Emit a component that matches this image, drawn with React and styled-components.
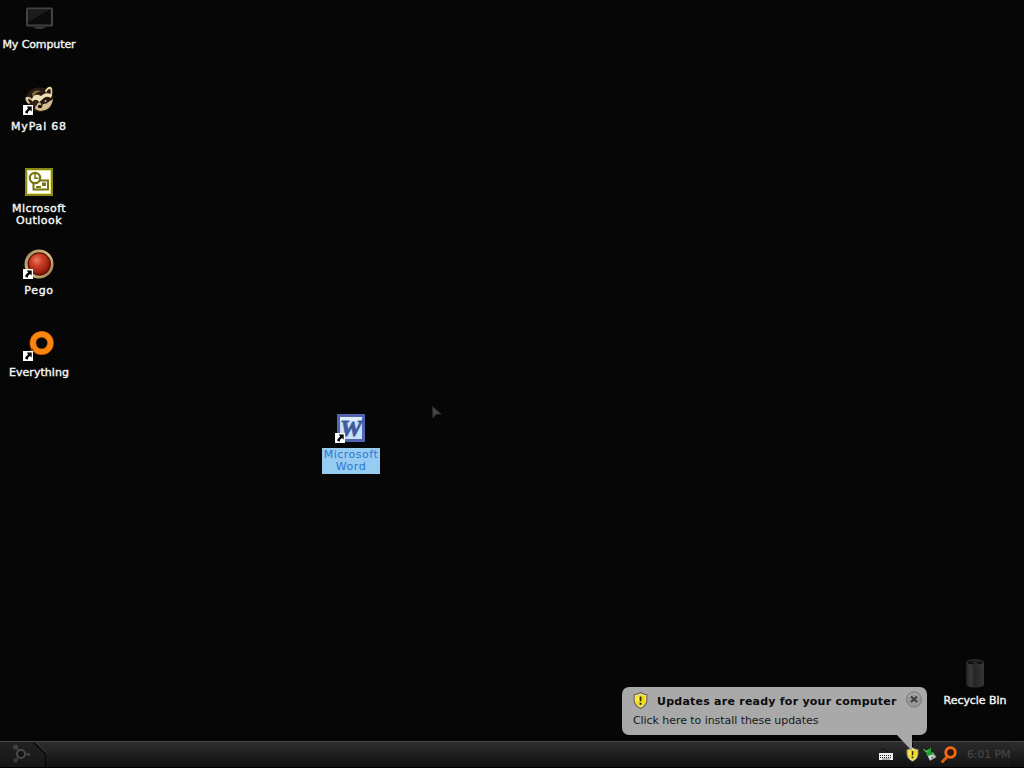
import React from "react"
import styled, { createGlobalStyle } from "styled-components"

const GlobalStyle = createGlobalStyle`
    body {
        margin: 0;
        background: #060606;
        overflow: hidden;
    }
`

const Screen = styled.div`
    position: relative;
    display: flex;
    flex-direction: column;
    width: 1024px;
    height: 768px;
    background: #060606;
    font-family: "DejaVu Sans", sans-serif;
    font-size: 11px;
    cursor: default;
    user-select: none;
`

const Desktop = styled.main`
    flex: 1;
`

const IconColumn = styled.div`
    display: flex;
    flex-direction: column;
    width: 78px;
`

const IconCell = styled.div`
    display: flex;
    flex-direction: column;
    align-items: center;
    box-sizing: border-box;
    width: 78px;
    height: 82px;
    padding-top: 2px;

    svg {
        display: block;
        flex: none;
    }
`

const FreeSpot = styled.div`
    position: absolute;
    left: ${(props) => props.$x}px;
    top: ${(props) => props.$y}px;
`

const Label = styled.div`
    margin-top: 4px;
    padding: 1px 2px;
    color: ${(props) => (props.$selected ? "#2a78d2" : "#f4f4f4")};
    background: ${(props) => (props.$selected ? "#97cbf1" : "transparent")};
    -webkit-text-stroke: ${(props) => (props.$selected ? "0" : "0.4px #f4f4f4")};
    letter-spacing: ${(props) => props.$spacing || 0}px;
    line-height: 12px;
    text-align: center;
    white-space: pre;
`

const Taskbar = styled.footer`
    display: flex;
    justify-content: space-between;
    box-sizing: border-box;
    height: 27px;
    border-top: 1px solid #484848;
    border-bottom: 1px solid #000;
    background: linear-gradient(#2d2d2d, #222 40%, #101010);
`

const StartButton = styled.div`
    width: 48px;
    height: 25px;

    svg {
        display: block;
    }
`

const Tray = styled.div`
    display: flex;
    align-items: center;
    height: 25px;
    padding-right: 14px;

    svg {
        display: block;
        flex: none;
    }
`

const TrayItems = styled.div`
    display: flex;
    align-items: center;
    gap: 2px;
    height: 25px;
    padding-left: 9px;
    border-left: 1px solid #090909;
    background: linear-gradient(#292929, #202020 50%, #141414);
`

const TraySlot = styled.div`
    display: flex;
    justify-content: center;
    width: ${(props) => props.$width}px;
`

const ShieldSlot = styled(TraySlot)`
    z-index: 1;
    margin-left: 10px;
    margin-right: -8px;
`

const Clock = styled.div`
    width: 43px;
    margin-left: 7px;
    color: #4a4a4a;
    letter-spacing: -0.15px;
    line-height: 25px;
    white-space: nowrap;
`

const Balloon = styled.section`
    position: absolute;
    z-index: 2;
    left: 622px;
    top: 687px;
    box-sizing: border-box;
    width: 305px;
    height: 48px;
    padding: 4px 4px 0 10px;
    border-radius: 7px;
    background: #a9a9a9;
    color: #181818;
`

const BalloonHead = styled.div`
    display: flex;
    align-items: flex-start;
    height: 20px;

    svg:first-child {
        margin-top: 1px;
    }
`

const BalloonTitle = styled.strong`
    flex: 1;
    margin-left: 8px;
    color: #0c0c0c;
    font-weight: bold;
    letter-spacing: 0.24px;
    line-height: 22px;
    white-space: nowrap;
`

const BalloonText = styled.div`
    margin: 2px 0 0 1px;
    letter-spacing: -0.06px;
    line-height: 16px;
    white-space: nowrap;
`

const BalloonTail = styled.svg`
    position: absolute;
    left: 274px;
    top: 47px;
`

function Shortcut() {
    return (
        <g>
            <rect x="0" y="21" width="10" height="10" fill="#fff" />
            <path d="M3.7 22.500h5v5L7 26C5.600 27 4.900 28 4.700 29.800L2 28.500c.3-1.600 1.500-2.700 3.200-4z" fill="#000" />
        </g>
    )
}

function ComputerIcon() {
    return (
        <svg width="32" height="32" viewBox="0 0 32 32">
            <rect x="4" y="6.500" width="25" height="17" rx="0.5" fill="#0b0b0b" stroke="#424242" strokeWidth="2" />
            <path d="M5 7.5h22L5 20z" fill="#1c1c1c" />
            <path d="M10 25h13c-2 1.200-3 2-6.500 2s-5-.8-6.500-2z" fill="#3c3c3c" />
        </svg>
    )
}

function RaccoonIcon() {
    return (
        <svg width="32" height="32" viewBox="0 0 32 32">
            <path d="M4 16C3 11 4 9 8 6c4-3 10-3 15-1l4-3 3 2v12c0 7-6 12-13 12C10 28 5 23 4 16z" fill="#281c10" />
            <path d="M22 7c1-3 4-5 6-4 2 2 1 7 1 9l-2-1c1-3 1-5 0-6-2 0-3 2-4 4z" fill="#e6d3a7" />
            <path d="M9 15c-2-2-5-3-6.500-1.500C2 16 4 19 6 20l1-1c-1-1-2-3-2-4 2 0 3 1 4 2z" fill="#dbc598" />
            <path d="M9 10c2-4 5-4 9-3l-5 2-3 4z" fill="#8a6c42" />
            <path d="M9 15c1-4 4-5 7-4l2 1c3-3 7-4 11-1l-1 3c-3-2-6-2-9 2l-3 2c-2-3-4-3-7 0z" fill="#efdfb8" />
            <path d="M22 17c3 1 6 0 8-2-1 6-4 10-8 11l-5 1-5-2 1-5 4-2 2 4z" fill="#d5bd91" />
            <path d="M18 17c3-3 7-3 9-1-1 3-5 4-7 4z" fill="#241a11" />
            <path d="M9 18c2-2 4-2 6 0l-1 3-4 2z" fill="#312317" />
            <ellipse cx="17" cy="22.500" rx="2.200" ry="1.800" fill="#181512" />
            <circle cx="22.500" cy="17" r="0.900" fill="#e9bc70" />
            <Shortcut />
        </svg>
    )
}

function OutlookIcon() {
    return (
        <svg width="32" height="32" viewBox="0 0 32 32">
            <rect x="3" y="3" width="26" height="26" fill="#fff" stroke="#8b8a16" strokeWidth="2" />
            <rect x="4.500" y="4.500" width="23" height="23" fill="none" stroke="#e8e68c" />
            <path d="M10.500 17v6.500h14.500V14.500H16" fill="#fff" stroke="#77760e" strokeWidth="2" />
            <circle cx="12" cy="12" r="5.200" fill="#fff" stroke="#77760e" strokeWidth="2.200" />
            <path d="M12 8v4.300h3.500" fill="none" stroke="#77760e" strokeWidth="1.500" />
            <path d="M19 16.500h4v3.500h-4zM13 20h5v2h-5z" fill="#77760e" />
        </svg>
    )
}

function PegoIcon() {
    return (
        <svg width="32" height="32" viewBox="0 0 32 32">
            <defs>
                <radialGradient id="pegoBall" cx="0.38" cy="0.32" r="0.68">
                    <stop offset="0" stopColor="#ee7b62" />
                    <stop offset="0.4" stopColor="#cf4127" />
                    <stop offset="1" stopColor="#8d1a0a" />
                </radialGradient>
                <linearGradient id="pegoRim" x1="0" y1="0" x2="1" y2="1">
                    <stop offset="0" stopColor="#8f8054" />
                    <stop offset="0.5" stopColor="#d9c28a" />
                    <stop offset="1" stopColor="#9c753c" />
                </linearGradient>
            </defs>
            <circle cx="16" cy="16" r="14.500" fill="url(#pegoRim)" />
            <circle cx="16.300" cy="16" r="11.700" fill="#5f1509" />
            <circle cx="16.300" cy="15.800" r="10.300" fill="url(#pegoBall)" />
            <Shortcut />
        </svg>
    )
}

function EverythingIcon() {
    return (
        <svg width="32" height="32" viewBox="0 0 32 32">
            <circle cx="18.700" cy="13" r="8.800" fill="none" stroke="#c65e05" strokeWidth="6.600" />
            <circle cx="18.700" cy="13" r="8.800" fill="none" stroke="#fb860f" strokeWidth="5" />
            <path d="M10 19l-4 4" stroke="#7d3b05" strokeWidth="2" />
            <Shortcut />
        </svg>
    )
}

function WordIcon() {
    return (
        <svg width="32" height="32" viewBox="0 0 32 32">
            <rect x="3.500" y="3.500" width="25" height="25" fill="#c6e0fa" stroke="#5266b0" strokeWidth="3" />
            <path d="M5 5h22v4H5z" fill="#deedfb" />
            <text
                x="5"
                y="23.500"
                textLength="22"
                lengthAdjust="spacingAndGlyphs"
                fill="#405a9d"
                stroke="#405a9d"
                strokeWidth="0.800"
                fontFamily="Liberation Serif, serif"
                fontSize="23"
                fontWeight="bold"
                fontStyle="italic"
            >
                W
            </text>
            <Shortcut />
        </svg>
    )
}

function BinIcon() {
    return (
        <svg width="32" height="32" viewBox="0 0 32 32">
            <defs>
                <linearGradient id="binBody">
                    <stop offset="0" stopColor="#202020" />
                    <stop offset="0.25" stopColor="#393939" />
                    <stop offset="0.5" stopColor="#252525" />
                    <stop offset="1" stopColor="#363636" />
                </linearGradient>
            </defs>
            <path d="M7 4v22c0 2.500 4 3.500 9 3.500s9-1 9-3.500V4z" fill="url(#binBody)" />
            <ellipse cx="16" cy="4.500" rx="8.700" ry="2.600" fill="#111" stroke="#3c3c3c" />
            <path d="M12 4l5-1 3 2-4 1z" fill="#292929" />
        </svg>
    )
}

function StartLogo() {
    return (
        <svg width="48" height="25" viewBox="0 0 48 25">
            <path d="M0 0h34l11.500 11.500V25H0z" fill="#1b1b1b" opacity="0.6" />
            <path d="M33.500 0L45.500 12v13" fill="none" stroke="#050505" strokeWidth="1.200" />
            <path d="M35.500 0L46 10.500" stroke="#414141" />
            <path d="M16 5l3 4M16 18l3-4M24 12h4" stroke="#383838" strokeWidth="2" />
            <circle cx="21" cy="12" r="4" fill="#141414" stroke="#4a4a4a" strokeWidth="2" />
            <circle cx="15.500" cy="5" r="2.600" fill="#414141" />
            <circle cx="15.500" cy="18.500" r="2.200" fill="#3b3b3b" />
            <circle cx="28.500" cy="12.500" r="1.500" fill="#444" />
        </svg>
    )
}

function KeyboardIcon() {
    return (
        <svg width="16" height="16" viewBox="0 0 16 16">
            <path d="M3 3l2-2 2 2 3 2" fill="none" stroke="#111" />
            <rect x="1" y="6" width="14" height="7" fill="#eee" />
            <path d="M2 8.500h12M2 10.500h12" stroke="#222" strokeDasharray="1 1" />
            <path d="M4 12h8" stroke="#777" />
        </svg>
    )
}

function ShieldIcon({ size }) {
    return (
        <svg width={size} height={size} viewBox="0 0 16 16">
            <path d="M8 .5c2 1.500 4 1.900 6 2v5c0 4-3 6.500-6 8-3-1.500-6-4-6-8v-5c2-.1 4-.5 6-2z" fill="#e9e7d0" stroke="#655b38" />
            <path d="M8 2.200c1.500 1 3 1.400 4.500 1.500v4c0 3-2 5-4.500 6.300-2.500-1.300-4.500-3.300-4.500-6.300v-4C5 3.600 6.500 3.200 8 2.200z" fill="#f2db16" />
            <path d="M4.500 4.500C6 4.300 7 3.900 8 3.200v5.300H4.500z" fill="#fff25c" />
            <path d="M8 4.300v4.500M8 10.200v1.700" stroke="#30290a" strokeWidth="1.700" />
        </svg>
    )
}

function SafelyRemoveIcon() {
    return (
        <svg width="16" height="16" viewBox="0 0 16 16">
            <path d="M5 8l6-3 3.500 5-6.500 4z" fill="#80877f" />
            <path d="M6 9l5-2 2.500 3.500L8 13z" fill="#d6dbd4" />
            <path d="M9 10.500l2-1 .7 1-2 1z" fill="#424a43" />
            <path d="M1 2l3.500 1.500L9 .5v5l2 2.500-6.500.5V6z" fill="#18a42c" />
            <path d="M1.500 2.500l3 2.500 2-2" fill="none" stroke="#78df68" />
        </svg>
    )
}

function SearchIcon() {
    return (
        <svg width="18" height="18" viewBox="0 0 18 18">
            <path d="M7 11l-4.500 4.500" stroke="#e65e0c" strokeWidth="3" strokeLinecap="round" />
            <circle cx="10.500" cy="6.500" r="4.800" fill="#321707" stroke="#f36a12" strokeWidth="2.800" />
        </svg>
    )
}

function CloseIcon() {
    return (
        <svg width="18" height="18" viewBox="0 0 18 18">
            <circle cx="9" cy="8.500" r="7.500" fill="#989898" stroke="#7c7c7c" />
            <path d="M3.500 6a6 6 0 0 1 11 0" fill="none" stroke="#b4b4b4" />
            <path d="M6 5.500l6 5.500M12 5.500l-6 5.500" stroke="#3a3a3a" strokeWidth="1.900" />
        </svg>
    )
}

const icons = [
    { label: "My Computer", Icon: ComputerIcon, spacing: -0.1 },
    { label: "MyPal 68", Icon: RaccoonIcon, spacing: 0.8 },
    { label: "Microsoft\nOutlook", Icon: OutlookIcon, spacing: 0.45 },
    { label: "Pego", Icon: PegoIcon, spacing: 0.7 },
    { label: "Everything", Icon: EverythingIcon, spacing: 0.05 },
]

function DesktopIcon({ label, Icon, selected, spacing }) {
    return (
        <IconCell>
            <Icon />
            <Label $selected={selected} $spacing={spacing}>
                {label}
            </Label>
        </IconCell>
    )
}

function UpdateBalloon() {
    return (
        <Balloon>
            <BalloonHead>
                <ShieldIcon size={17} />
                <BalloonTitle>Updates are ready for your computer</BalloonTitle>
                <CloseIcon />
            </BalloonHead>
            <BalloonText>Click here to install these updates</BalloonText>
            <BalloonTail width="18" height="18" viewBox="0 0 18 18">
                <path d="M0 0h16v17z" fill="#a9a9a9" />
            </BalloonTail>
        </Balloon>
    )
}

export default function App() {
    return (
        <Screen>
            <GlobalStyle />
            <Desktop>
                <IconColumn>
                    {icons.map((item) => (
                        <DesktopIcon key={item.label} {...item} />
                    ))}
                </IconColumn>
                <FreeSpot $x={312} $y={410}>
                    <DesktopIcon label={"Microsoft\nWord"} Icon={WordIcon} spacing={0.5} selected />
                </FreeSpot>
                <FreeSpot $x={936} $y={656}>
                    <DesktopIcon label="Recycle Bin" Icon={BinIcon} spacing={-0.05} />
                </FreeSpot>
                <FreeSpot $x={432} $y={406}>
                    <svg width="10" height="14" viewBox="0 0 10 14">
                        <path d="M.5.5l8.500 7.500-5 .2L1 12z" fill="#484848" stroke="#2c2c2c" />
                    </svg>
                </FreeSpot>
            </Desktop>
            <Taskbar>
                <StartButton>
                    <StartLogo />
                </StartButton>
                <Tray>
                    <TraySlot $width={16}>
                        <KeyboardIcon />
                    </TraySlot>
                    <ShieldSlot $width={16}>
                        <ShieldIcon size={15} />
                    </ShieldSlot>
                    <TrayItems>
                        <TraySlot $width={16}>
                            <SafelyRemoveIcon />
                        </TraySlot>
                        <TraySlot $width={18}>
                            <SearchIcon />
                        </TraySlot>
                        <Clock>6:01 PM</Clock>
                    </TrayItems>
                </Tray>
            </Taskbar>
            <UpdateBalloon />
        </Screen>
    )
}
